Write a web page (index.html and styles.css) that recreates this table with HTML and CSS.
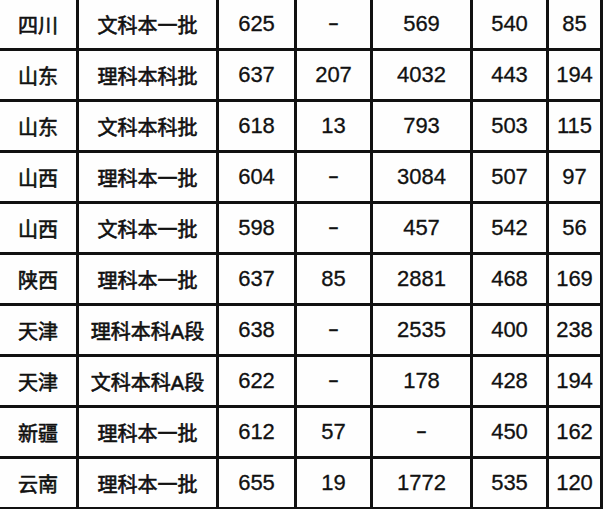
FILE: index.html
```html
<!DOCTYPE html>
<html lang="zh">
<head>
<meta charset="utf-8">
<link rel="stylesheet" href="styles.css">
</head>
<body>
<div class="table">
  <div class="c zh">四川</div><div class="c zh">文科本一批</div><div class="c">625</div><div class="c dash">–</div><div class="c">569</div><div class="c">540</div><div class="c">85</div>
  <div class="c zh">山东</div><div class="c zh">理科本科批</div><div class="c">637</div><div class="c">207</div><div class="c">4032</div><div class="c">443</div><div class="c">194</div>
  <div class="c zh">山东</div><div class="c zh">文科本科批</div><div class="c">618</div><div class="c">13</div><div class="c">793</div><div class="c">503</div><div class="c">115</div>
  <div class="c zh">山西</div><div class="c zh">理科本一批</div><div class="c">604</div><div class="c dash">–</div><div class="c">3084</div><div class="c">507</div><div class="c">97</div>
  <div class="c zh">山西</div><div class="c zh">文科本一批</div><div class="c">598</div><div class="c dash">–</div><div class="c">457</div><div class="c">542</div><div class="c">56</div>
  <div class="c zh">陕西</div><div class="c zh">理科本一批</div><div class="c">637</div><div class="c">85</div><div class="c">2881</div><div class="c">468</div><div class="c">169</div>
  <div class="c zh">天津</div><div class="c zh">理科本科A段</div><div class="c">638</div><div class="c dash">–</div><div class="c">2535</div><div class="c">400</div><div class="c">238</div>
  <div class="c zh">天津</div><div class="c zh">文科本科A段</div><div class="c">622</div><div class="c dash">–</div><div class="c">178</div><div class="c">428</div><div class="c">194</div>
  <div class="c zh">新疆</div><div class="c zh">理科本一批</div><div class="c">612</div><div class="c">57</div><div class="c dash">–</div><div class="c">450</div><div class="c">162</div>
  <div class="c zh">云南</div><div class="c zh">理科本一批</div><div class="c">655</div><div class="c">19</div><div class="c">1772</div><div class="c">535</div><div class="c">120</div>
</div>
</body>
</html>
```
FILE: styles.css
```css
html, body {
  margin: 0;
  padding: 0;
  background: #fefefe;
  overflow: hidden;
}
.table {
  display: grid;
  grid-template-columns: 79px 140px 78px 76px 100px 76px 54px;
  grid-auto-rows: 51px;
  font-family: "Liberation Sans", "Noto Sans CJK SC", sans-serif;
  font-size: 22px;
  font-weight: 400;
  color: #111;
  -webkit-text-stroke: 0.3px #111;
}
.c {
  display: flex;
  align-items: center;
  justify-content: center;
  border-right: 3px solid #111;
  border-bottom: 3px solid #111;
  white-space: nowrap;
}
.zh {
  font-size: 20px;
  font-weight: 400;
  -webkit-text-stroke: 0.6px #111;
}
.dash {
  font-size: 17px;
  font-weight: 700;
}
```
